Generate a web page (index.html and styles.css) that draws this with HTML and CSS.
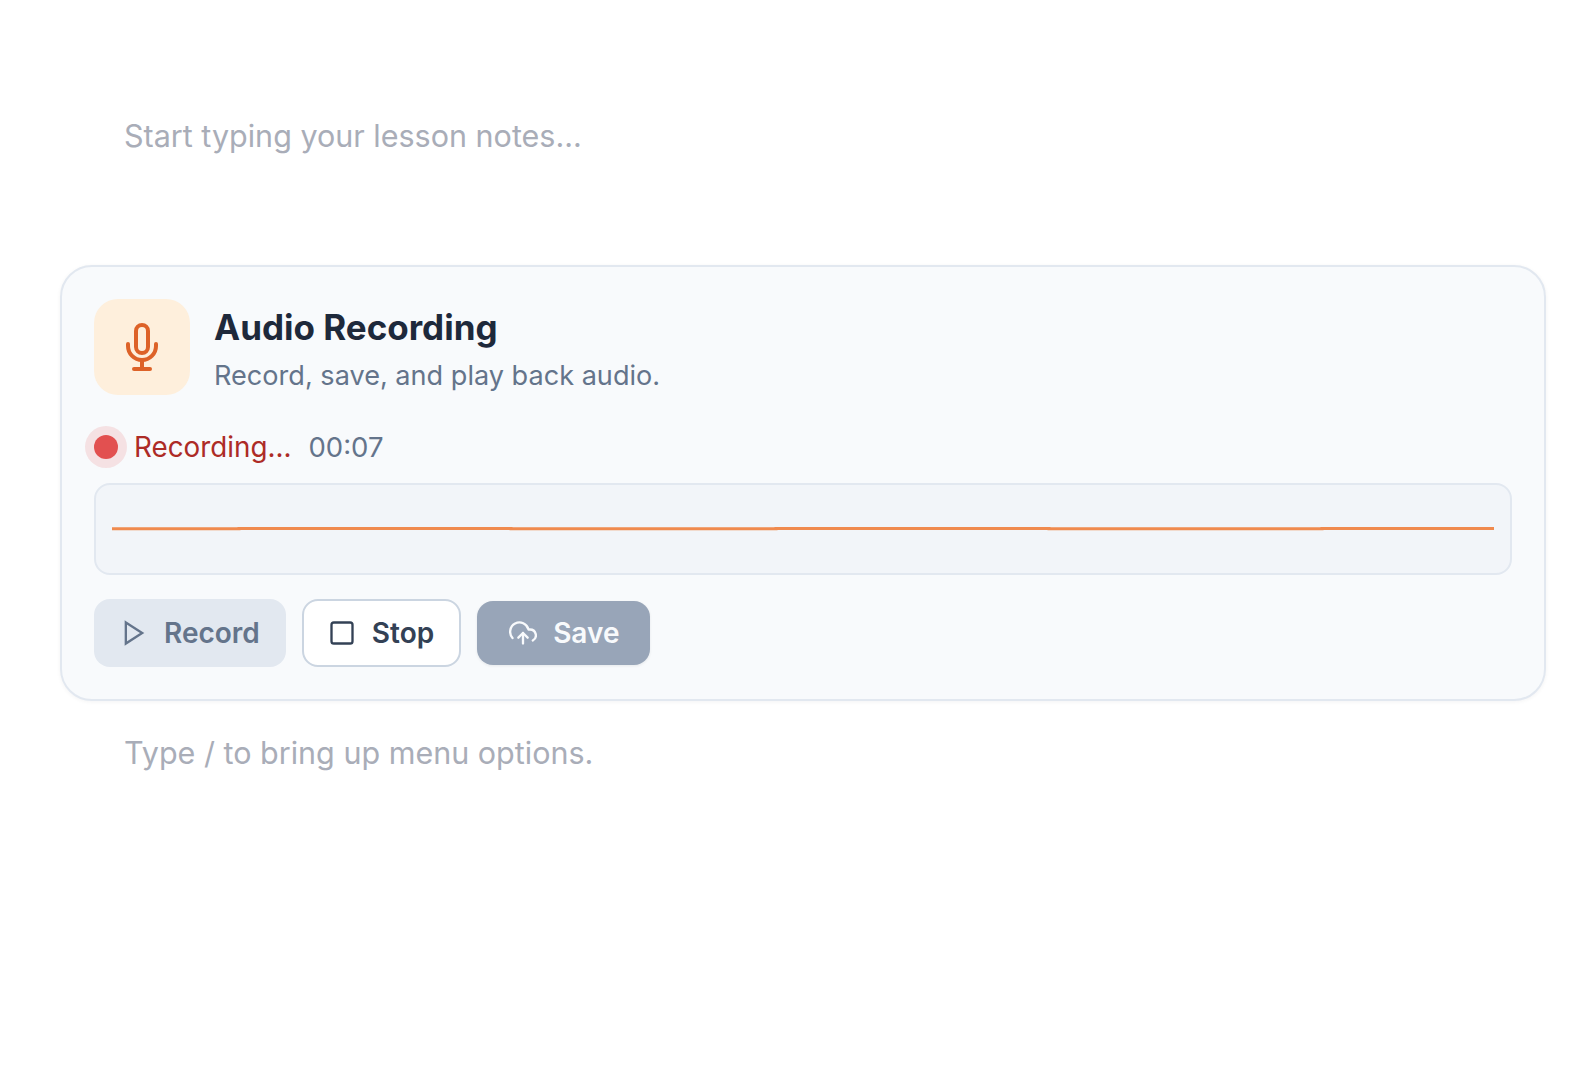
FILE: index.html
```html
<!DOCTYPE html>
<html lang="en">
<head>
    <meta charset="UTF-8">
    <meta name="viewport" content="width=device-width, initial-scale=1.0">
    <title>Lesson notes</title>
    <link rel="stylesheet" href="styles.css">
</head>
<body>
    <div class="editor">
        <p class="placeholder first">Start typing your lesson notes...</p>

        <div class="card">
            <div class="card-head">
                <div class="card-icon">
                    <svg width="48" height="48" viewBox="0 0 24 24" fill="none" stroke="currentColor" stroke-width="2" stroke-linecap="round" stroke-linejoin="round">
                        <path d="M12 1a3 3 0 0 0-3 3v8a3 3 0 0 0 6 0V4a3 3 0 0 0-3-3Z"/>
                        <path d="M5 10.5v1a7 7 0 0 0 14 0v-1"/>
                        <path d="M12 18.5V23"/>
                        <path d="M8 23h8"/>
                    </svg>
                </div>
                <div class="card-text">
                    <h2 class="card-title">Audio Recording</h2>
                    <p class="card-sub">Record, save, and play back audio.</p>
                </div>
            </div>

            <div class="status">
                <span class="dot"></span>
                <span class="status-label">Recording...</span>
                <span class="status-time">00:07</span>
            </div>

            <div class="wave">
                <svg class="wave-line" width="1382" height="6" viewBox="0 0 1382 6">
                    <path d="M0 2.8H127V2.5H399V2.8H664V2.5H937V2.8H1210V2.5H1382" fill="none" stroke="#f08a4e" stroke-width="3"/>
                </svg>
            </div>

            <div class="buttons">
                <button class="btn btn-record">
                    <svg width="28" height="28" viewBox="0 0 24 24" fill="none" stroke="currentColor" stroke-width="2">
                        <polygon points="5 3 19 12 5 21"/>
                    </svg>
                    Record
                </button>
                <button class="btn btn-stop">
                    <svg width="28" height="28" viewBox="0 0 24 24" fill="none" stroke="currentColor" stroke-width="2" stroke-linejoin="round">
                        <rect x="3" y="3" width="18" height="18" rx="2"/>
                    </svg>
                    Stop
                </button>
                <button class="btn btn-save">
                    <svg width="28" height="28" viewBox="0 0 24 24" fill="none" stroke="currentColor" stroke-width="2" stroke-linecap="round" stroke-linejoin="round">
                        <polyline points="16 16 12 12 8 16"/>
                        <line x1="12" y1="12" x2="12" y2="21"/>
                        <path d="M20.39 18.39A5 5 0 0 0 18 9h-1.26A8 8 0 1 0 3 16.3"/>
                    </svg>
                    Save
                </button>
            </div>
        </div>

        <p class="placeholder last">Type / to bring up menu options.</p>
    </div>
</body>
</html>
```

FILE: styles.css
```css
* {
    margin: 0;
    padding: 0;
    box-sizing: border-box;
}

body {
    font-family: 'Inter', sans-serif;
    background: #fff;
    height: 1080px;
    overflow: hidden;
}

.editor {
    padding: 116px 42px 0 60px;
}

.placeholder {
    font-size: 30.5px;
    line-height: 40px;
    color: #a9adb8;
    padding-left: 64px;
}

.placeholder.first {
    margin-bottom: 109px;
}

.placeholder.last {
    margin-top: 32px;
}

.card {
    background: #f8fafc;
    border: 2px solid #e2e8f0;
    border-radius: 32px;
    padding: 32px;
    box-shadow: 0 1px 4px rgba(15, 23, 42, 0.05);
}

.card-head {
    display: flex;
    align-items: flex-start;
    gap: 24px;
    height: 96px;
}

.card-icon {
    width: 96px;
    height: 96px;
    border-radius: 24px;
    background: #feefdc;
    color: #dd6228;
    display: flex;
    align-items: center;
    justify-content: center;
}

.card-text {
    padding-top: 6px;
}

.card-title {
    font-size: 35px;
    line-height: 44px;
    font-weight: 700;
    color: #1e293b;
}

.card-sub {
    font-size: 27.1px;
    line-height: 40px;
    color: #64748b;
    margin-top: 7px;
}

.status {
    display: flex;
    align-items: center;
    height: 40px;
    margin: 32px 0 16px;
    font-size: 27.8px;
}

.dot {
    width: 24px;
    height: 24px;
    border-radius: 50%;
    background: #e25050;
    box-shadow: 0 0 0 9px rgba(226, 80, 80, 0.14);
    margin-right: 16px;
}

.status-label {
    color: #ad2b26;
    margin-right: 17px;
}

.status-time {
    font-size: 27.5px;
    color: #64748b;
}

.wave {
    height: 92px;
    background: #f2f5f9;
    border: 2px solid #e2e8f0;
    border-radius: 16px;
    display: flex;
    align-items: center;
    padding: 0 16px;
}

.wave-line {
    display: block;
}

.buttons {
    display: flex;
    align-items: center;
    gap: 16px;
    margin-top: 24px;
}

.btn {
    display: flex;
    align-items: center;
    gap: 16px;
    height: 68px;
    padding: 0 24px;
    border: 2px solid transparent;
    border-radius: 16px;
    font-family: inherit;
    font-size: 28px;
    font-weight: 600;
}

.btn-record {
    background: #e2e8f0;
    color: #64748b;
}

.btn-stop {
    padding-right: 25px;
    background: #fff;
    border-color: #cbd5e1;
    color: #334155;
}

.btn-save {
    height: 64px;
    padding: 0 31px 0 32px;
    border: none;
    background: #98a5b8;
    color: #f8fafc;
    box-shadow: 0 1px 3px rgba(15, 23, 42, 0.08);
}
```
